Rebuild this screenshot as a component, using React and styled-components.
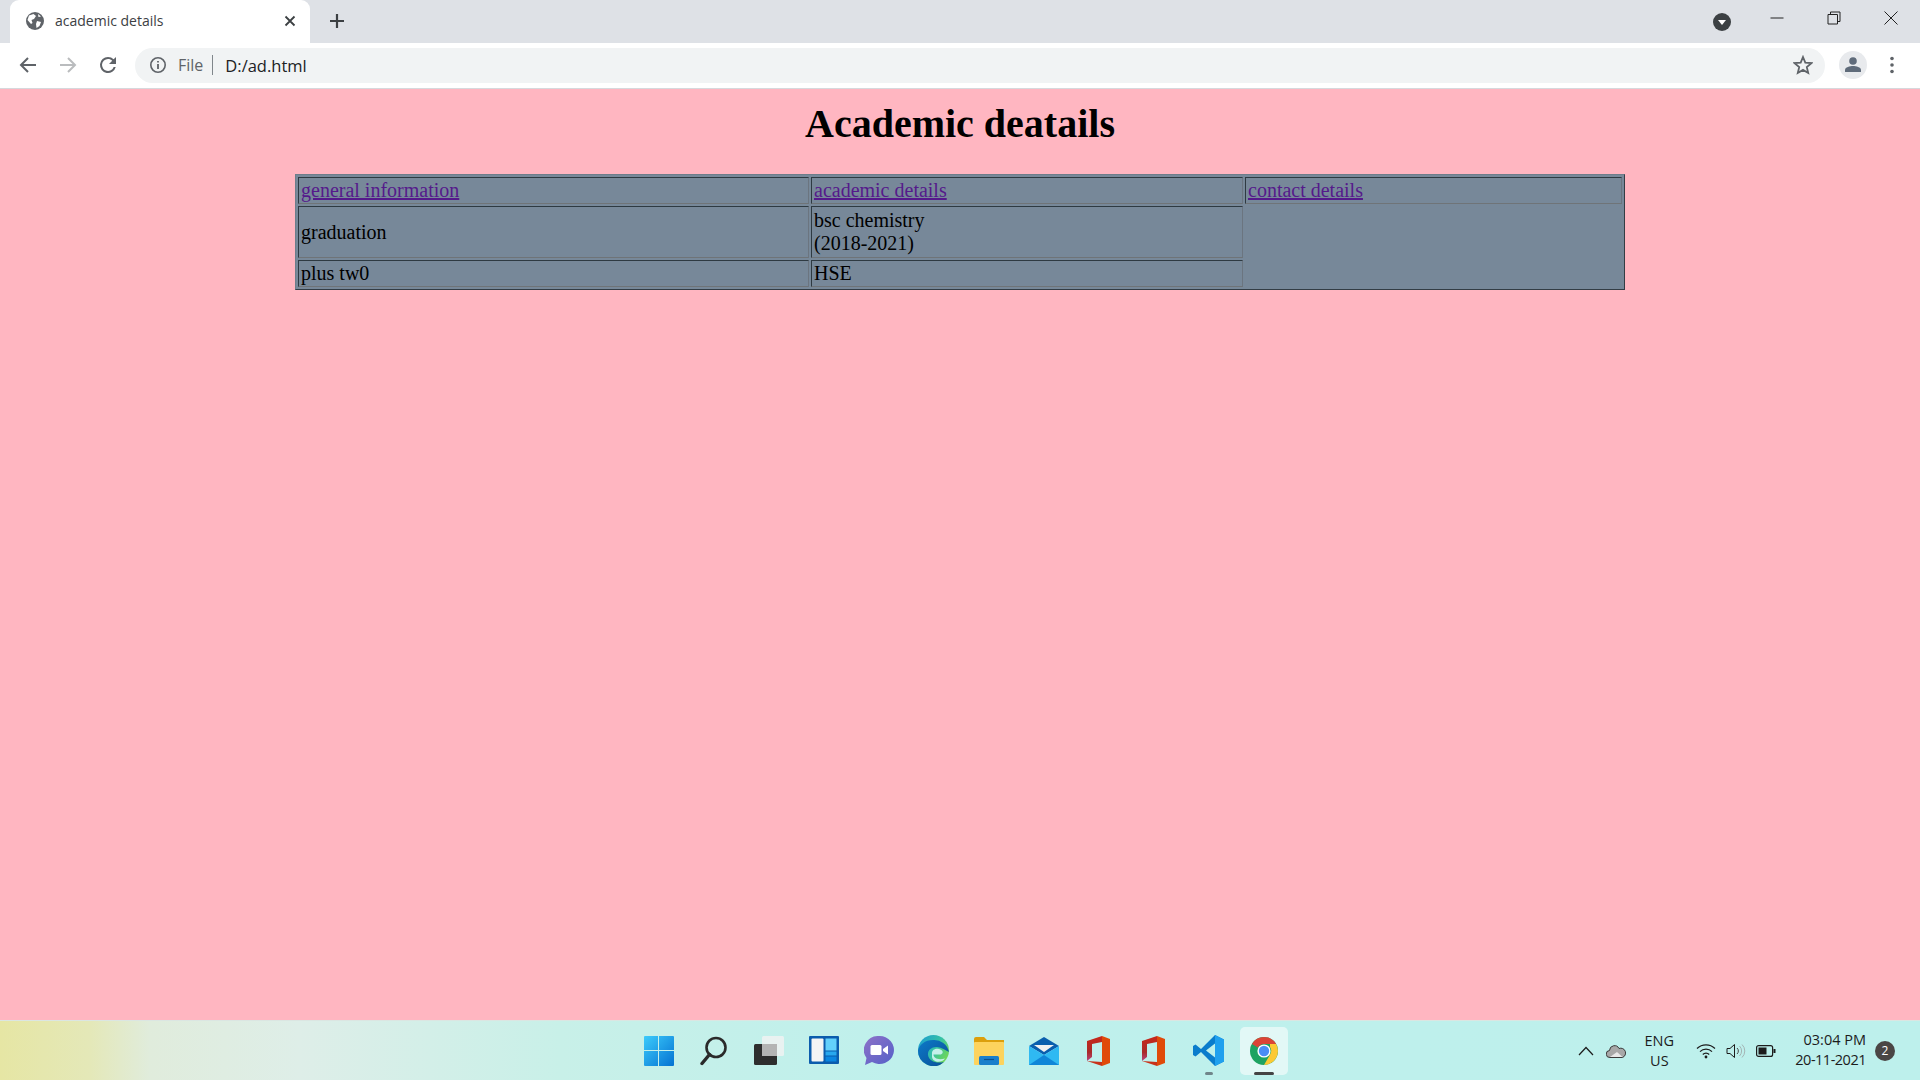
import React from 'react';
import styled, { createGlobalStyle } from 'styled-components';

const GlobalStyle = createGlobalStyle`
  html, body {
    margin: 0;
    padding: 0;
    height: 100%;
    overflow: hidden;
  }
`;

const uiFont = `"Open Sans", "Noto Sans", sans-serif`;

const Window = styled.div`
  display: flex;
  flex-direction: column;
  width: 1920px;
  height: 1080px;
  overflow: hidden;
`;

/* browser chrome */
const TabStrip = styled.div`
  display: flex;
  align-items: flex-end;
  height: 43px;
  padding-left: 10px;
  background-color: #dee1e6;
  flex-shrink: 0;
`;

const Tab = styled.div`
  display: flex;
  align-items: center;
  width: 300px;
  height: 43px;
  padding: 0 14px 1px 16px;
  box-sizing: border-box;
  background-color: #fff;
  border-radius: 9px 9px 0 0;
`;

const TabTitle = styled.span`
  flex: 1;
  margin: 0 0 2px 11px;
  font-family: ${uiFont};
  font-size: 14px;
  color: #3c4043;
`;

const NewTab = styled.div`
  display: flex;
  margin: 0 0 14px 19px;
`;

const WindowControls = styled.div`
  display: flex;
  align-items: center;
  height: 43px;
  margin-left: auto;
  padding-right: 1px;
`;

const ProfileDrop = styled.div`
  display: flex;
  margin: 0 17px 0 0;
  padding-top: 1px;
`;

const ControlButton = styled.div`
  display: flex;
  align-items: center;
  justify-content: center;
  width: 57px;
  height: 36px;
  margin-bottom: 7px;
`;

const Toolbar = styled.div`
  display: flex;
  align-items: center;
  height: 46px;
  padding: 0 0 1px 16px;
  box-sizing: border-box;
  background-color: #fff;
  border-bottom: 1px solid #d6d8dc;
  flex-shrink: 0;
`;

const NavIcon = styled.div`
  display: flex;
  width: 24px;
  height: 24px;
  margin-right: 16px;
`;

const Omnibox = styled.div`
  display: flex;
  align-items: center;
  width: 1690px;
  height: 35px;
  margin-left: -1px;
  padding: 0 12px 0 14px;
  box-sizing: border-box;
  background-color: #f1f3f4;
  border-radius: 18px;
`;

const SchemeLabel = styled.span`
  margin-left: 11px;
  padding-right: 9px;
  border-right: 1px solid #80868b;
  font-family: ${uiFont};
  font-size: 16px;
  line-height: 20px;
  color: #5f6368;
`;

const UrlText = styled.span`
  flex: 1;
  margin-left: 12px;
  font-family: ${uiFont};
  font-size: 16.5px;
  color: #202124;
`;

const Avatar = styled.div`
  display: flex;
  align-items: center;
  justify-content: center;
  width: 28px;
  height: 28px;
  margin-left: 14px;
  background-color: #e8eaed;
  border-radius: 50%;
`;

const MenuDots = styled.div`
  display: flex;
  margin-left: 22px;
`;

/* page */
const Page = styled.main`
  flex: 1;
  padding: 8px;
  background-color: #ffb6c1;
  overflow: hidden;
  font-family: "Liberation Serif", "Times New Roman", serif;
  color: #000;
`;

const Heading = styled.h1`
  margin: 3px 0 27px;
  font-size: 40px;
  font-weight: bold;
  text-align: center;
`;

const DetailsTable = styled.table`
  width: 1330px;
  margin: 0 auto;
  table-layout: fixed;
  border-collapse: separate;
  border-spacing: 2px;
  border: 1px solid;
  border-color: #6d7d8b #333d45 #333d45 #6d7d8b;
  background-color: #778899;
  font-size: 20px;
`;

const FirstColumn = styled.col`
  width: 511px;
`;

const SecondColumn = styled.col`
  width: 432px;
`;

const Cell = styled.td`
  padding: ${(p) => (p.$tall ? '2px' : '1px 2px')};
  border: 1px solid;
  border-color: #2e3a42 #6b7580 #6f7478 #2e3a42;
`;

const NavLink = styled.a`
  color: #551a8b;
  text-decoration: underline;
`;

/* taskbar */
const Taskbar = styled.footer`
  display: grid;
  grid-template-columns: 1fr auto 1fr;
  align-items: center;
  height: 60px;
  box-sizing: border-box;
  border-top: 1px solid #dbe6e2;
  background: linear-gradient(90deg, #e6e6a4 0, #e4e8b8 90px, #e0ecdc 150px, #deeee8 300px, #c8f0e8 560px, #bff0ec 900px, #bdf0ec 100%);
  flex-shrink: 0;
`;

const TaskIcons = styled.div`
  grid-column: 2;
  display: flex;
  align-items: center;
  gap: 7px;
  margin-left: 2px;
`;

const TaskButton = styled.div`
  position: relative;
  display: flex;
  align-items: center;
  justify-content: center;
  width: 48px;
  height: 48px;
  border-radius: 5px;
  background-color: ${(p) => (p.$active ? 'rgba(255,255,255,.55)' : 'transparent')};
`;

const RunDot = styled.span`
  position: absolute;
  left: 50%;
  bottom: 0;
  width: ${(p) => (p.$active ? 20 : 8)}px;
  height: 3px;
  transform: translateX(-50%);
  border-radius: 2px;
  background-color: ${(p) => (p.$active ? '#444' : '#70858a')};
`;

const Tray = styled.div`
  grid-column: 3;
  display: flex;
  align-items: center;
  justify-content: flex-end;
  padding-right: 25px;
  font-family: ${uiFont};
  font-size: 14.5px;
  color: #1c1c1c;
`;

const TrayIcon = styled.div`
  display: flex;
  margin-right: ${(p) => p.$gap || 0}px;
`;

const Lang = styled.div`
  width: 42px;
  margin-right: 16px;
  line-height: 20px;
  text-align: center;
`;

const Clock = styled.div`
  margin: -2px 0 0 19px;
  line-height: 20px;
  text-align: right;
`;

const DateLine = styled.div`
  letter-spacing: -0.5px;
`;

const Badge = styled.div`
  display: flex;
  align-items: center;
  justify-content: center;
  width: 20px;
  height: 20px;
  margin-left: 9px;
  background-color: #4a4645;
  border-radius: 50%;
  color: #fff;
  font-size: 12px;
`;

/* icons */
const Globe = () => (
  <svg width="18" height="18" viewBox="0 0 18 18">
    <circle cx="9" cy="9" r="9" fill="#5f6368" />
    <path d="M3 3.5 L7.5 2 L10 4 L8 7 L5.5 8 L6.5 11 L5 12 L1.5 8 Z M11 9 L15 10 L13.5 14 L10.5 16 L10 12 Z M12 2 L15 4.5 L12.5 5 Z" fill="#fff" />
  </svg>
);

const CloseX = () => (
  <svg width="12" height="12" viewBox="0 0 12 12">
    <path d="M1.5 1.5 L10.5 10.5 M10.5 1.5 L1.5 10.5" stroke="#3c4043" strokeWidth="1.8" fill="none" />
  </svg>
);

const Plus = () => (
  <svg width="16" height="16" viewBox="0 0 16 16">
    <path d="M8 1 V15 M1 8 H15" stroke="#3c4043" strokeWidth="2.2" fill="none" />
  </svg>
);

const Back = ({ color = '#5f6368', flip }) => (
  <svg width="24" height="24" viewBox="0 0 24 24" style={flip ? { transform: 'scaleX(-1)' } : undefined}>
    <path d="M20 12 H5 M12 5 L5 12 L12 19" stroke={color} strokeWidth="2" fill="none" />
  </svg>
);

const Reload = () => (
  <svg width="24" height="24" viewBox="0 0 24 24">
    <path d="M17.65 6.35A7.96 7.96 0 0 0 12 4a8 8 0 1 0 7.73 10h-2.08A6 6 0 1 1 12 6c1.66 0 3.14.69 4.22 1.78L13 11h7V4l-2.35 2.35z" fill="#5f6368" />
  </svg>
);

const Info = () => (
  <svg width="18" height="18" viewBox="0 0 18 18">
    <circle cx="9" cy="9" r="7.2" stroke="#5f6368" strokeWidth="1.6" fill="none" />
    <path d="M9 8 V13 M9 5 V6.6" stroke="#5f6368" strokeWidth="1.8" fill="none" />
  </svg>
);

const Star = () => (
  <svg width="20" height="20" viewBox="0 0 20 20">
    <path d="M10 2 L12.3 7.6 L18.4 8.1 L13.8 12.1 L15.2 18 L10 14.9 L4.8 18 L6.2 12.1 L1.6 8.1 L7.7 7.6 Z" stroke="#5f6368" strokeWidth="1.8" fill="none" />
  </svg>
);

const Person = () => (
  <svg width="18" height="18" viewBox="0 0 18 18">
    <circle cx="9" cy="5" r="3.8" fill="#5f6b7a" />
    <path d="M1 16 V14 C1 11 6 10 9 10 C12 10 17 11 17 14 V16 Z" fill="#5f6b7a" />
  </svg>
);

const Dots = () => (
  <svg width="6" height="18" viewBox="0 0 6 18">
    <circle cx="3" cy="2.5" r="1.8" fill="#5f6368" />
    <circle cx="3" cy="9" r="1.8" fill="#5f6368" />
    <circle cx="3" cy="15.5" r="1.8" fill="#5f6368" />
  </svg>
);

const Dropdown = () => (
  <svg width="18" height="18" viewBox="0 0 18 18">
    <circle cx="9" cy="9" r="9" fill="#3c4043" />
    <path d="M5 7 H13 L9 12 Z" fill="#fff" />
  </svg>
);

const Minimize = () => (
  <svg width="14" height="14" viewBox="0 0 14 14">
    <path d="M0.5 7 H13.5" stroke="#222" strokeWidth="1" />
  </svg>
);

const Restore = () => (
  <svg width="14" height="14" viewBox="0 0 14 14">
    <path d="M1 3.5 H10.5 V13 H1 Z M3.5 3.5 V1 H13 V10.5 H10.5" stroke="#222" strokeWidth="1" fill="none" />
  </svg>
);

const CloseThin = () => (
  <svg width="14" height="14" viewBox="0 0 14 14">
    <path d="M0.5 0.5 L13.5 13.5 M13.5 0.5 L0.5 13.5" stroke="#222" strokeWidth="1" fill="none" />
  </svg>
);

const WindowsLogo = () => (
  <svg width="30" height="30" viewBox="0 0 30 30">
    <defs>
      <linearGradient id="winGrad" x1="0" y1="0" x2="1" y2="1">
        <stop offset="0" stopColor="#3ccbfb" />
        <stop offset="1" stopColor="#0472d2" />
      </linearGradient>
    </defs>
    <path d="M0 1 Q0 0 1 0 H14 V14 H0 Z M15 0 H29 Q30 0 30 1 V14 H15 Z M0 15 H14 V30 H1 Q0 30 0 29 Z M15 15 H30 V29 Q30 30 29 30 H15 Z" fill="url(#winGrad)" />
  </svg>
);

const SearchGlass = () => (
  <svg width="28" height="30" viewBox="0 0 28 30">
    <circle cx="16" cy="11.5" r="9.5" stroke="#2a2a2a" strokeWidth="2.6" fill="none" />
    <path d="M9.5 18.5 L2 27.5" stroke="#2a2a2a" strokeWidth="3.4" strokeLinecap="round" />
  </svg>
);

const TaskView = () => (
  <svg width="30" height="30" viewBox="0 0 30 30">
    <rect x="0" y="8" width="23" height="21" rx="1.5" fill="#2e2e2e" />
    <rect x="8" y="0" width="22" height="20" rx="1.5" fill="#f2f2f2" fillOpacity="0.8" />
    <rect x="8" y="8" width="15" height="12" fill="#b4b4b4" />
  </svg>
);

const Widgets = () => (
  <svg width="30" height="30" viewBox="0 0 30 30">
    <rect x="0" y="0" width="30" height="28" rx="1" fill="#0b5cad" />
    <rect x="2.5" y="2.5" width="12" height="23" rx="1" fill="#f4f4f4" />
    <rect x="16.5" y="2.5" width="11" height="12" fill="#63d0fb" />
    <rect x="16.5" y="15.5" width="11" height="4" fill="#28a8ee" />
    <rect x="16.5" y="20.5" width="11" height="5" fill="#0b86e0" />
  </svg>
);

const TeamsChat = () => (
  <svg width="30" height="30" viewBox="0 0 30 30">
    <defs>
      <linearGradient id="chatGrad" x1="0" y1="0" x2="1" y2="1">
        <stop offset="0" stopColor="#8e72c8" />
        <stop offset="1" stopColor="#5460c8" />
      </linearGradient>
    </defs>
    <path d="M15 0 A14.5 14 0 1 1 8 26 L1 29 L2.5 22 A14.5 14 0 0 1 15 0 Z" fill="url(#chatGrad)" />
    <rect x="6.5" y="9" width="11" height="10" rx="1.5" fill="#fff" />
    <path d="M19 13 L24 9.5 V18.5 L19 15 Z" fill="#fff" />
  </svg>
);

const Edge = () => (
  <svg width="31" height="31" viewBox="0 0 31 31">
    <defs>
      <linearGradient id="edgeTop" x1="0" y1="0" x2="1" y2="0.6">
        <stop offset="0" stopColor="#1a9ad6" />
        <stop offset="0.6" stopColor="#35c1a6" />
        <stop offset="1" stopColor="#6dd65a" />
      </linearGradient>
      <linearGradient id="edgeBottom" x1="0" y1="0" x2="1" y2="1">
        <stop offset="0" stopColor="#0c79c8" />
        <stop offset="1" stopColor="#0a4f96" />
      </linearGradient>
    </defs>
    <circle cx="15.5" cy="15.5" r="15.5" fill="url(#edgeTop)" />
    <path d="M0 15.5 A15.5 15.5 0 0 0 26 27 C18 29 11 26 10 20 C9.5 15 14 11.5 19 12 C24 12.5 27 15 31 17 A15 15 0 0 0 15 5 C7 5 1 10 0 15.5 Z" fill="url(#edgeBottom)" />
    <path d="M14 18 C14 14.5 18 13 21 14 C25 15 26 18 23 19.5 H15.5 C15.5 23 20 25.5 27 23.5 C24 28 15 28 14 22 Z" fill="#c4f0ea" />
  </svg>
);

const Folder = () => (
  <svg width="30" height="28" viewBox="0 0 30 28">
    <path d="M0 2 Q0 0 2 0 H10 L13 3 H30 V6 H0 Z" fill="#dc9f0c" />
    <rect x="0" y="5" width="30" height="23" rx="1" fill="#fdd35d" />
    <rect x="5" y="19" width="20" height="9" rx="1.5" fill="#1a7fcb" />
    <path d="M10 22.5 H20" stroke="#0b4f8c" strokeWidth="1.2" />
  </svg>
);

const Mail = () => (
  <svg width="30" height="28" viewBox="0 0 30 28">
    <path d="M0 9 L15 0 L30 9 L15 18 Z" fill="#0a5fae" />
    <path d="M5 8 H25 L15 15 Z" fill="#f1f1f1" />
    <path d="M0 9 L15 18 L30 9 V28 H0 Z" fill="#2fb9f2" />
    <path d="M0 28 L15 18 L30 28 Z" fill="#0f86d8" />
  </svg>
);

const Office = () => (
  <svg width="24" height="30" viewBox="0 0 24 30">
    <defs>
      <linearGradient id="officeLeft" x1="0" y1="0" x2="0" y2="1">
        <stop offset="0" stopColor="#c9281a" />
        <stop offset="0.65" stopColor="#a92a2a" />
        <stop offset="1" stopColor="#b8457e" />
      </linearGradient>
    </defs>
    <path d="M0 25 L15 26 V30 Z" fill="#c8321a" />
    <path d="M0 5 L15 0 V6 L5 8 V21 L0 25 Z" fill="url(#officeLeft)" />
    <path d="M15 0 L23 3 V27 L15 30 Z" fill="#e04a0a" />
  </svg>
);

const VsCode = () => (
  <svg width="31" height="31" viewBox="0 0 31 31">
    <path d="M22 0 L31 4.5 V26.5 L22 31 L8 17 L2.5 21.5 L0 20 V11 L2.5 9.5 L8 14 Z M22 8.5 L13 15.5 L22 22.5 Z" fill="#0a7ccc" />
    <path d="M22 0 L31 4.5 V26.5 L22 31 Z" fill="#1fa0ee" />
  </svg>
);

const ChromeLogo = () => (
  <svg width="28" height="28" viewBox="0 0 28 28">
    <circle cx="14" cy="14" r="14" fill="#1ea362" />
    <path d="M14 0 A14 14 0 0 1 26.1 7 H14 A7 7 0 0 0 7.9 10.5 L2 7 A14 14 0 0 1 14 0 Z" fill="#db4437" />
    <path d="M26.1 7 A14 14 0 0 1 14 28 L20.1 17.5 A7 7 0 0 0 20 10 L20 7 Z" fill="#fcc934" />
    <circle cx="14" cy="14" r="6.6" fill="#fff" />
    <circle cx="14" cy="14" r="5.2" fill="#4a8df6" />
  </svg>
);

const Chevron = () => (
  <svg width="16" height="10" viewBox="0 0 16 10">
    <path d="M1 9 L8 1.5 L15 9" stroke="#1c1c1c" strokeWidth="1.2" fill="none" />
  </svg>
);

const Cloud = () => (
  <svg width="20" height="14" viewBox="0 0 20 14">
    <path d="M4 13.5 A3.5 3.5 0 0 1 3.5 6.5 A5 5 0 0 1 13 4.5 A4.2 4.2 0 0 1 16.5 13.5 Z" fill="#a8a8a8" stroke="#3a3a3a" strokeWidth="1" />
    <path d="M4 13 L11 8 L16.5 13 Z" fill="#e8e8e8" />
  </svg>
);

const Wifi = () => (
  <svg width="20" height="16" viewBox="0 0 20 16">
    <path d="M1 5.5 A13 13 0 0 1 19 5.5 M4 8.7 A8.5 8.5 0 0 1 16 8.7 M6.8 11.5 A4.5 4.5 0 0 1 13.2 11.5" stroke="#1c1c1c" strokeWidth="1.2" fill="none" />
    <circle cx="10" cy="14" r="1.4" fill="#1c1c1c" />
  </svg>
);

const Speaker = () => (
  <svg width="20" height="16" viewBox="0 0 20 16">
    <path d="M1 5.5 H4 L8.5 1.5 V14.5 L4 10.5 H1 Z" stroke="#1c1c1c" strokeWidth="1" fill="none" />
    <path d="M11 5 A4 4 0 0 1 11 11" stroke="#4a4a4a" strokeWidth="1" fill="none" />
    <path d="M13.5 3 A7 7 0 0 1 13.5 13 M16 1.5 A9 9 0 0 1 16 14.5" stroke="#a4b4b4" strokeWidth="1" fill="none" />
  </svg>
);

const Battery = () => (
  <svg width="20" height="12" viewBox="0 0 20 12">
    <rect x="0.6" y="0.6" width="16" height="10.8" rx="2" stroke="#1c1c1c" strokeWidth="1.2" fill="none" />
    <rect x="2.5" y="2.5" width="8" height="7" fill="#1c1c1c" />
    <rect x="17.5" y="4" width="2" height="4" fill="#1c1c1c" />
  </svg>
);

const taskItems = [
  { id: 'start', Icon: WindowsLogo },
  { id: 'search', Icon: SearchGlass },
  { id: 'view', Icon: TaskView },
  { id: 'widgets', Icon: Widgets },
  { id: 'chat', Icon: TeamsChat },
  { id: 'edge', Icon: Edge },
  { id: 'files', Icon: Folder },
  { id: 'mail', Icon: Mail },
  { id: 'office', Icon: Office },
  { id: 'office2', Icon: Office },
  { id: 'code', Icon: VsCode, running: true },
  { id: 'chrome', Icon: ChromeLogo, running: true, active: true },
];

const App = () => (
  <Window>
    <GlobalStyle />
    <TabStrip>
      <Tab>
        <Globe />
        <TabTitle>academic details</TabTitle>
        <CloseX />
      </Tab>
      <NewTab>
        <Plus />
      </NewTab>
      <WindowControls>
        <ProfileDrop>
          <Dropdown />
        </ProfileDrop>
        <ControlButton>
          <Minimize />
        </ControlButton>
        <ControlButton>
          <Restore />
        </ControlButton>
        <ControlButton>
          <CloseThin />
        </ControlButton>
      </WindowControls>
    </TabStrip>
    <Toolbar>
      <NavIcon>
        <Back />
      </NavIcon>
      <NavIcon>
        <Back color="#babcbe" flip />
      </NavIcon>
      <NavIcon>
        <Reload />
      </NavIcon>
      <Omnibox>
        <Info />
        <SchemeLabel>File</SchemeLabel>
        <UrlText>D:/ad.html</UrlText>
        <Star />
      </Omnibox>
      <Avatar>
        <Person />
      </Avatar>
      <MenuDots>
        <Dots />
      </MenuDots>
    </Toolbar>
    <Page>
      <Heading>Academic deatails</Heading>
      <DetailsTable>
        <colgroup>
          <FirstColumn />
          <SecondColumn />
          <col />
        </colgroup>
        <tbody>
          <tr>
            <Cell><NavLink href="#general">general information</NavLink></Cell>
            <Cell><NavLink href="#academic">academic details</NavLink></Cell>
            <Cell><NavLink href="#contact">contact details</NavLink></Cell>
          </tr>
          <tr>
            <Cell $tall>graduation</Cell>
            <Cell $tall>bsc chemistry<br />(2018-2021)</Cell>
          </tr>
          <tr>
            <Cell>plus tw0</Cell>
            <Cell>HSE</Cell>
          </tr>
        </tbody>
      </DetailsTable>
    </Page>
    <Taskbar>
      <TaskIcons>
        {taskItems.map(({ id, Icon, running, active }) => (
          <TaskButton key={id} $active={active}>
            <Icon />
            {running && <RunDot $active={active} />}
          </TaskButton>
        ))}
      </TaskIcons>
      <Tray>
        <TrayIcon $gap={12}><Chevron /></TrayIcon>
        <TrayIcon $gap={12}><Cloud /></TrayIcon>
        <Lang>ENG<br />US</Lang>
        <TrayIcon $gap={10}><Wifi /></TrayIcon>
        <TrayIcon $gap={10}><Speaker /></TrayIcon>
        <TrayIcon><Battery /></TrayIcon>
        <Clock>
          03:04 PM
          <DateLine>20-11-2021</DateLine>
        </Clock>
        <Badge>2</Badge>
      </Tray>
    </Taskbar>
  </Window>
);

export default App;
